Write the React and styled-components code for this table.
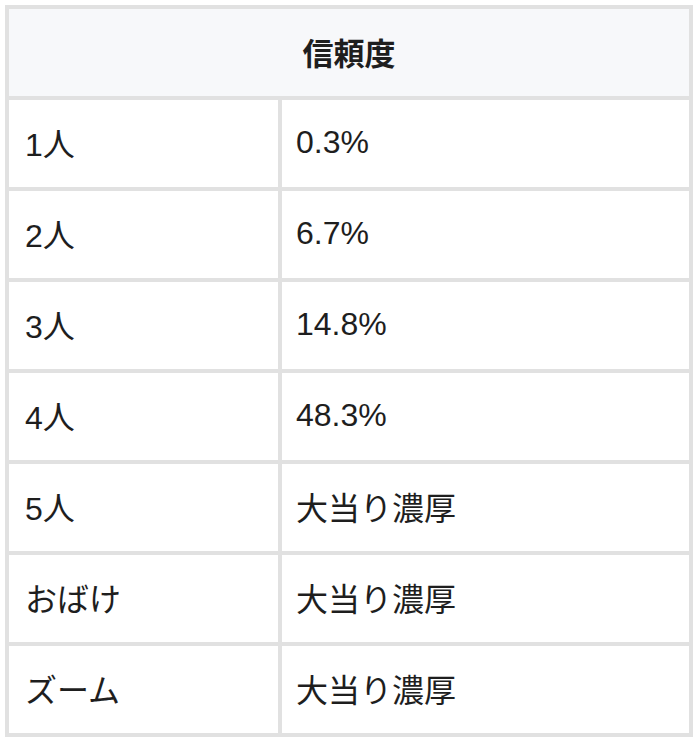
import { Fragment } from 'react'
import styled, { createGlobalStyle } from 'styled-components'

const GlobalStyle = createGlobalStyle`
  body {
    margin: 0;
    background: #fff;
    font-family: "Liberation Sans", "Noto Sans CJK JP", sans-serif;
    color: #1e1e1e;
  }
`

const Table = styled.div`
  margin: 5px;
  width: 688px;
  box-sizing: border-box;
  display: grid;
  grid-template-columns: 269px 407px;
  gap: 4px;
  padding: 4px;
  background: #e1e1e1;
`

const HeadCell = styled.div`
  grid-column: 1 / span 2;
  height: 87px;
  box-sizing: border-box;
  padding-bottom: 3px;
  background: #f7f8fa;
  display: flex;
  align-items: center;
  justify-content: center;
  font-family: "Noto Sans CJK JP", sans-serif;
  font-size: 31px;
  font-weight: 700;
`

const Cell = styled.div`
  height: 87px;
  box-sizing: border-box;
  background: #fff;
  display: flex;
  align-items: center;
  padding: 0 ${p => (p.$first ? '16px' : '14px')} 3px;
  font-size: 32px;
  font-weight: 400;
`

const rows = [
  ['1人', '0.3%'],
  ['2人', '6.7%'],
  ['3人', '14.8%'],
  ['4人', '48.3%'],
  ['5人', '大当り濃厚'],
  ['おばけ', '大当り濃厚'],
  ['ズーム', '大当り濃厚'],
]

export default function App() {
  return (
    <>
      <GlobalStyle />
      <Table>
        <HeadCell>信頼度</HeadCell>
        {rows.map(([name, value]) => (
          <Fragment key={name}>
            <Cell $first>{name}</Cell>
            <Cell>{value}</Cell>
          </Fragment>
        ))}
      </Table>
    </>
  )
}
